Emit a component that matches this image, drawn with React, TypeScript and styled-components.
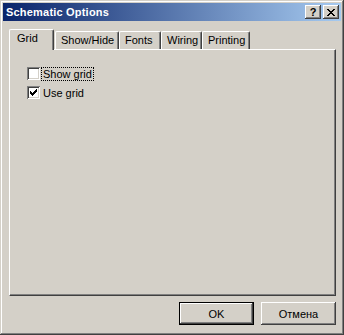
import React from "react";
import styled, { createGlobalStyle } from "styled-components";

const GlobalStyle = createGlobalStyle`
  html, body { margin: 0; padding: 0; background: #d4d0c8; }
  * { box-sizing: border-box; }
`;

const FONT = `"Liberation Sans", Arial, sans-serif`;

const Window = styled.div`
  width: 344px;
  height: 335px;
  padding: 3px;
  background: #d4d0c8;
  display: flex;
  flex-direction: column;
  font-family: ${FONT};
  font-size: 11px;
  color: #000;
  box-shadow: inset -1px -1px #404040, inset 1px 1px #d4d0c8,
    inset -2px -2px #808080, inset 2px 2px #ffffff;
`;

const TitleBar = styled.div`
  height: 18px;
  flex: none;
  display: flex;
  align-items: center;
  justify-content: space-between;
  padding: 0 2px 0 2px;
  background: linear-gradient(to right, #0a246a, #a6caf0);
`;

const Title = styled.span`
  color: #fff;
  font-weight: bold;
  font-size: 11px;
  line-height: 18px;
  padding-left: 1px;
  letter-spacing: 0.2px;
`;

const CaptionButtons = styled.div`
  display: flex;
  gap: 2px;
`;

const CaptionButton = styled.div`
  width: 16px;
  height: 14px;
  background: #d4d0c8;
  box-shadow: inset -1px -1px #404040, inset 1px 1px #ffffff,
    inset -2px -2px #808080;
  display: flex;
  align-items: center;
  justify-content: center;
  font-weight: bold;
  font-size: 11px;
  line-height: 14px;
  color: #000;
`;

const Body = styled.div`
  flex: 1;
  display: flex;
  flex-direction: column;
  padding: 8px 5px 7px 6px;
`;

const TabStrip = styled.div`
  display: flex;
  align-items: flex-end;
  margin-bottom: -1px;
  height: 21px;
`;

const Tab = styled.div<{ $w: number; $active?: boolean }>`
  width: ${(p) => p.$w}px;
  height: ${(p) => (p.$active ? 21 : 18)}px;
  margin-bottom: ${(p) => (p.$active ? 0 : 1)}px;
  margin-right: ${(p) => (p.$active ? 1 : 0)}px;
  background: #d4d0c8;
  border-top: 1px solid #fff;
  border-left: 1px solid #fff;
  border-right: 1px solid #404040;
  border-top-left-radius: 2px;
  border-top-right-radius: 2px;
  box-shadow: inset -1px 0 #808080;
  padding: ${(p) => (p.$active ? "0 0 3px 7px" : "0 0 0 5px")};
  display: flex;
  align-items: center;
  line-height: 13px;
  white-space: nowrap;
  position: ${(p) => (p.$active ? "relative" : "static")};
  z-index: ${(p) => (p.$active ? 1 : 0)};
`;

const Panel = styled.div`
  flex: 1;
  border-top: 1px solid #fff;
  border-left: 1px solid #fff;
  border-right: 1px solid #404040;
  border-bottom: 1px solid #404040;
  box-shadow: inset -1px -1px #808080;
  padding: 17px 0 0 17px;
  display: flex;
  flex-direction: column;
  gap: 6px;
`;

const CheckRow = styled.div`
  display: flex;
  align-items: center;
  height: 13px;
`;

const CheckBox = styled.div`
  width: 13px;
  height: 13px;
  background: #fff;
  box-shadow: inset 1px 1px #808080, inset -1px -1px #ffffff,
    inset 2px 2px #404040, inset -2px -2px #d4d0c8;
  display: flex;
  align-items: center;
  justify-content: center;
  flex: none;
`;

const Label = styled.span<{ $focus?: boolean }>`
  margin-left: 1px;
  padding: 0 1px;
  height: 14px;
  line-height: 13px;
  border: 1px ${(p) => (p.$focus ? "dotted #000" : "solid transparent")};
  white-space: nowrap;
`;

const ButtonRow = styled.div`
  display: flex;
  justify-content: flex-end;
  gap: 7px;
  margin-top: 6px;
`;

const Button = styled.div<{ $default?: boolean }>`
  width: 75px;
  height: 23px;
  display: flex;
  align-items: center;
  justify-content: center;
  background: #d4d0c8;
  font-size: 11px;
  box-shadow: ${(p) =>
    p.$default
      ? "inset 0 0 0 1px #000, inset -2px -2px #404040, inset 2px 2px #ffffff, inset -3px -3px #808080"
      : "inset -1px -1px #404040, inset 1px 1px #ffffff, inset -2px -2px #808080"};
`;

const CheckMark = () => (
  <svg width="7" height="7" viewBox="0 0 7 7" shapeRendering="crispEdges">
    <path
      d="M0 2h1v3H0zM1 3h1v3H1zM2 4h1v3H2zM3 3h1v3H3zM4 2h1v3H4zM5 1h1v3H5zM6 0h1v3H6z"
      fill="#000"
    />
  </svg>
);

const CloseGlyph = () => (
  <svg width="8" height="7" viewBox="0 0 8 7" shapeRendering="crispEdges">
    <path
      d="M0 0h2v1H0zM6 0h2v1H6zM1 1h2v1H1zM5 1h2v1H5zM2 2h4v1H2zM3 3h2v1H3zM2 4h4v1H2zM1 5h2v1H1zM5 5h2v1H5zM0 6h2v1H0zM6 6h2v1H6z"
      fill="#000"
    />
  </svg>
);

const tabs: { label: string; w: number; active?: boolean }[] = [
  { label: "Grid", w: 45, active: true },
  { label: "Show/Hide", w: 64 },
  { label: "Fonts", w: 42 },
  { label: "Wiring", w: 41 },
  { label: "Printing", w: 48 },
];

export default function App() {
  return (
    <>
      <GlobalStyle />
      <Window>
        <TitleBar>
          <Title>Schematic Options</Title>
          <CaptionButtons>
            <CaptionButton>?</CaptionButton>
            <CaptionButton>
              <CloseGlyph />
            </CaptionButton>
          </CaptionButtons>
        </TitleBar>
        <Body>
          <TabStrip>
            {tabs.map((t) => (
              <Tab key={t.label} $w={t.w} $active={t.active}>
                {t.label}
              </Tab>
            ))}
          </TabStrip>
          <Panel>
            <CheckRow>
              <CheckBox />
              <Label $focus>Show grid</Label>
            </CheckRow>
            <CheckRow>
              <CheckBox>
                <CheckMark />
              </CheckBox>
              <Label>Use grid</Label>
            </CheckRow>
          </Panel>
          <ButtonRow>
            <Button $default>OK</Button>
            <Button>Отмена</Button>
          </ButtonRow>
        </Body>
      </Window>
    </>
  );
}
